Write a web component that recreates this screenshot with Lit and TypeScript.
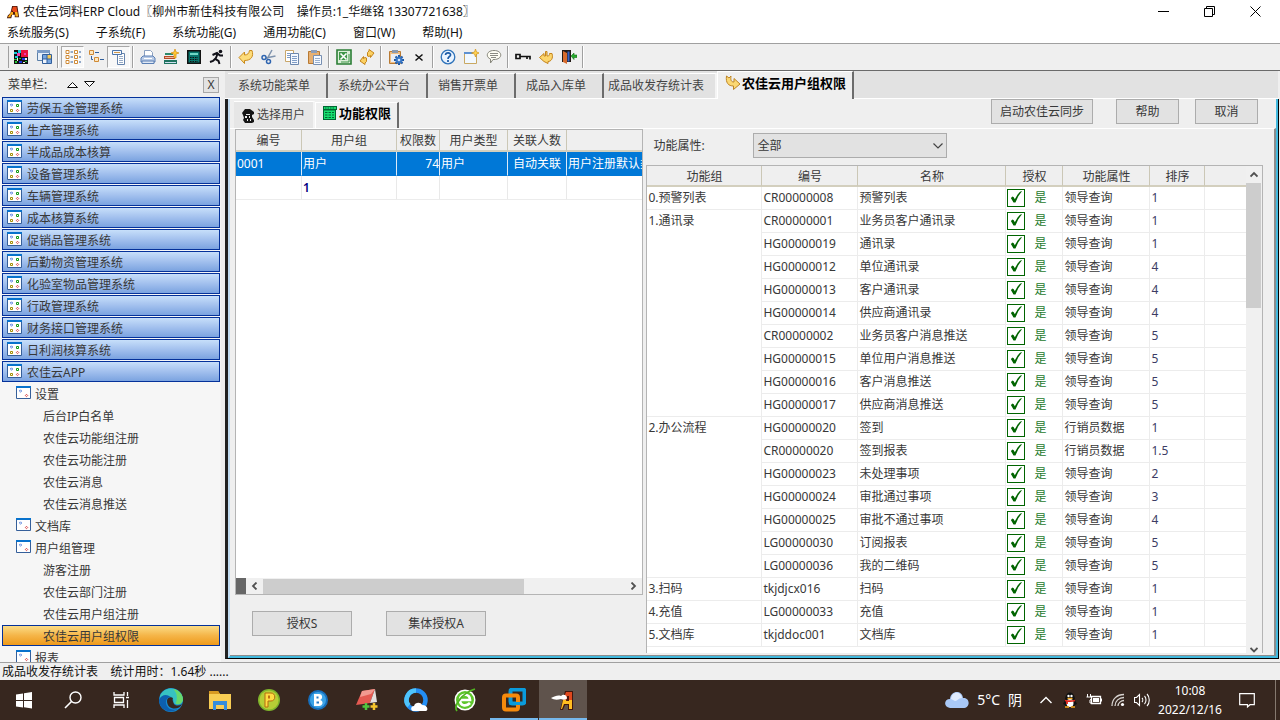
import { LitElement, html, css, svg, nothing } from "lit";
import { customElement, state } from "lit/decorators.js";
import { classMap } from "lit/directives/class-map.js";

const art: Record<string, unknown> = {
  logo: svg`<path d="M7 1h6l2 13h-5v-3H7l-1 4H1l1-3 3-3z" fill="#4a180a"/><path d="M8 2h4l1 6H8V6L6 8z" fill="#ea4a1a"/><path d="M10 8h3l1 5h-3zM2 14l4-6h2v3H6l-1 3z" fill="#ffae18"/>`,
  mosaic: svg`<path d="M1 1h14v14H1z" fill="#111"/><path d="M8 1h7v7H8z" fill="#e8123c"/><path d="M1 3h3v2H1zM5 1h3v3H5zM2 7h3v2H2z" fill="#18c8d8"/><path d="M4 4h3v3H4zM11 4h2v2h-2z" fill="#f03ab0"/><path d="M1 10h4v1H1zM2 12h2v2H2zM6 9h2v1H6zM12 12h2v1h-2z" fill="#24c836"/><path d="M9 9h3v2H9zM6 12h3v2H6z" fill="#1d36e0"/><path d="M12 9h2v2h-2zM4 9h1v3H4zM10 13h2v1h-2z" fill="#f2f2ee"/>`,
  windows: svg`<path d="M1.500 1.500h12v10h-12z" fill="#e6effa" stroke="#5b7fa8"/><path d="M1 1h13v3H1z" fill="#7c9cc6"/><path d="M6.500 5.500h9v9h-9z" fill="#eef4fc" stroke="#315f9c"/><path d="M7 6h4v4H7zM11 10h4v4h-4z" fill="#77a5df"/><path d="M11 6h4v4h-4z" fill="#f5c95a"/><path d="M11 6v8M7 10h8" stroke="#315f9c"/>`,
  list: svg`<g fill="#fff" stroke="#d08a35"><path d="M1 1.500h3v3H1zM9.500 1.500h3v3h-3zM1 6.500h3v3H1zM9.500 6.500h3v3h-3zM1 11.500h3v3H1zM9.500 11.500h3v3h-3z"/></g><path d="M5.500 3h2.500M14 3h2M5.500 8h2.500M14 8h2M5.500 13h2.500M14 13h2" stroke="#315f9c"/>`,
  tree: svg`<path d="M1.500 1.500h4v4h-4zM6.500 8.500h4v4h-4z" fill="#fde7c0" stroke="#d08a35"/><path d="M7 3.500h4M12 10.500h4M3.500 7v3.500H5" stroke="#315f9c" fill="none"/>`,
  panel: svg`<path d="M6.500 4.500h7v11h-7z" fill="#fff" stroke="#6684ad"/><path d="M8 7.500h4M8 9.500h4M8 11.500h4M8 13.500h4" stroke="#95a9c4"/><path d="M1.500 1.500h9v4h-9z" fill="#f5f8fd" stroke="#4d74a8"/><path d="M3 3.500h6" stroke="#d39a49"/>`,
  printer: svg`<path d="M4.500 1.500h6l2 2v5h-8z" fill="#fff" stroke="#8aa0c0"/><path d="M1 9l2-2h10l2 2v4H1z" fill="#b9cbe6" stroke="#5a7fb4"/><path d="M2 12h12v2.500H2z" fill="#dfe8f5" stroke="#5a7fb4"/><path d="M4 9.500h8" stroke="#fff"/>`,
  books: svg`<path d="M2 4h8v2H2z" fill="#2e8a6c"/><path d="M1 7h11v3H1z" fill="#b64a28"/><path d="M2 8.500h9" stroke="#e9b79c"/><path d="M1 11h13v4H1z" fill="#1f7360"/><path d="M2 13.500h11" stroke="#cde"/><path d="M12 0l1 3 3 1-3 1v4h-2V5L8 4l3-1z" fill="#ffc832" stroke="#d58c12" stroke-width=".7"/>`,
  calc: svg`<path d="M1 1h14v14H1z" fill="#111"/><path d="M2.500 2.500h11v11h-11z" fill="#08756c"/><path d="M4 4h8v2H4z" fill="#72d7c4"/><path d="M4 8.500h8M4 10.500h8M4 12.500h8" stroke="#111" stroke-dasharray="1.500 1"/>`,
  runner: svg`<circle cx="11.500" cy="2.500" r="1.800" fill="#101018"/><path d="M14 6.500h-3L8 4 3.500 6M8.500 5l-2 5 3 2 1 3M7 9l-3 3-3 1" fill="none" stroke="#101018" stroke-width="2"/>`,
  back: svg`<path d="M1 8.500L6.500 3v3C9.500 6 11 4.500 11.500 1.500h2.500c2 6-1 10-7.500 10v3z" fill="#fddc7a" stroke="#c98a1c"/>`,
  cut: svg`<path d="M11 1L6 10M14.500 7L5 9" stroke="#7f93ad" stroke-width="1.500"/><circle cx="3" cy="8.500" r="2" fill="none" stroke="#2f65b0" stroke-width="1.500"/><circle cx="7.500" cy="12.500" r="2" fill="none" stroke="#2f65b0" stroke-width="1.500"/>`,
  copy: svg`<path d="M1.500 1.500h8v11h-8z" fill="#fff" stroke="#c8a66a"/><path d="M6.500 4.500h8v11h-8z" fill="#f4f8fe" stroke="#6c87ad"/><path d="M3 4.500h3M3 6.500h3M3 8.500h3M8 7.500h5M8 9.500h5M8 11.500h5M8 13.500h5" stroke="#7f9cc6"/>`,
  paste: svg`<path d="M1.500 2.500h11v12h-11z" fill="#e7b071" stroke="#b87a33"/><path d="M4 1h6v3H4z" fill="#8e9fb8"/><path d="M6.500 6.500h8v9h-8z" fill="#f6faff" stroke="#7890b2"/><path d="M8 9.500h5M8 11.500h5M8 13.500h5" stroke="#9ab0cf"/>`,
  excel: svg`<path d="M1 1h14v14H1z" fill="#dcefd9" stroke="#2a7d34" stroke-width="1.600"/><path d="M3 3h8v8H3z" fill="#3f9648"/><path d="M4.500 4.500l6 6M10.500 4.500l-6 6" stroke="#fff" stroke-width="1.600"/><path d="M5 13h8M13 5v8" stroke="#3f9648"/>`,
  refresh: svg`<path d="M8.500 7V3.500L10 2V.500l5 3.500-3.500 4.500V6.500L10 7.500zM7.500 9v3.500L6 14v1.500L1 12l3.500-4.500v2L6 8.500z" fill="#fbd061" stroke="#c4841c"/>`,
  gearpaste: svg`<path d="M1.500 2.500h11v12h-11z" fill="#efbd83" stroke="#b87a33"/><path d="M4 1h6v3H4z" fill="#8b99ad"/><path d="M3 5h8v8H3z" fill="#e9eef6"/><path d="M11 6v10M6 11h10M7.500 7.500l7 7M14.500 7.500l-7 7" stroke="#1c56a4" stroke-width="2"/><circle cx="11" cy="11" r="3.500" fill="#3877c5"/><circle cx="11" cy="11" r="1.300" fill="#d5e6fb"/>`,
  cross: svg`<path d="M4.500 5.500l7 6M11.500 5.500l-7 6" stroke="#111" stroke-width="1.500"/>`,
  help: svg`<circle cx="8" cy="8" r="6.800" fill="#eaf4ff" stroke="#2f73ba" stroke-width="1.300"/><path d="M5.500 6c.2-3.200 5.500-2.700 5 .2C10.200 7.700 8 7.600 8 10M8 11v2" fill="none" stroke="#1a5aa6" stroke-width="1.700"/>`,
  newwin: svg`<path d="M1.500 3.500h12v11h-12z" fill="#f1f8ff" stroke="#c9a862"/><path d="M1 3h9v2H1z" fill="#5e91d1"/><path d="M12.500 0l1 3 3 1-3 1-1 3-1-3-3-1 3-1z" fill="#ffd455" stroke="#d3951d" stroke-width=".7"/>`,
  chat: svg`<path d="M8 1.500c9 0 9 9 0 9H7L4.500 14v-4C-.8 8 .5 1.500 8 1.500z" fill="#fffef4" stroke="#87877c"/><path d="M4 4.500h8M4 6.500h8M5 8.500h5" stroke="#8b8b83"/>`,
  key: svg`<path d="M1 5.500h4v4H1z" fill="none" stroke="#111" stroke-width="1.700"/><path d="M5 7.500h10v3M12 7v3" fill="none" stroke="#111" stroke-width="1.700"/>`,
  redo: svg`<path d="M1.500 8.500L6 4.500V7h1.500V2.500H9V7h1c1 0 1.500-1 1.500-2.500H14c1.500 5-1 8-4 8v2L6 12.500z" fill="#fcd56c" stroke="#c4841c"/>`,
  door: svg`<path d="M1 1h9v12H1z" fill="#221a16"/><path d="M2 2l4 2v11l-4-2z" fill="#d76b2d"/><path d="M6.500 2.500h2v10h-2z" fill="#3662c6"/><path d="M10 7l3-3v2h3v2.500h-3v2z" fill="#27a92c" stroke="#12701a" stroke-width=".6"/>`,
  spy: svg`<path d="M2 6l3-4h5l4 3v2l-2 1v2l2 3v2l-2 1H5l-2-3 1-2-1-3z" fill="#151515"/><path d="M6 7h4v1H6zM5 9h2v2H5zM9 9h1v2H9zM7 12h1v2H7zM10 12h1v2h-1z" fill="#eee"/>`,
  sheet: svg`<path d="M1 1h14v4h-1v10H1z" fill="#063"/><path d="M2 2h12v2H2zM2 5.500h11V14H2z" fill="#18e070"/><path d="M3 3h10" stroke="#063" stroke-dasharray="1.500 1"/><path d="M3 7.500h9M3 10h9M3 12.500h9" stroke="#063" stroke-dasharray="2.500 1"/>`,
  arrow: svg`<path d="M1.500 1c-1 7 2 10 7 10v3.500L15 9 9 3.500V7C6 7 5.500 5 6 1L4 3z" fill="#fbd873" stroke="#bd8424"/>`,
  module: svg`<path d="M.5.500h14v13H.5z" fill="#fff" stroke="#355f9a"/><path d="M0 0h15v2H0z" fill="#0872cc"/><path d="M4.500 3.800L5.700 5 4.500 6.200 3.300 5z" fill="none" stroke="#4b76de"/><path d="M9.500 4.500h2v2h-2z" fill="none" stroke="#159a16"/><path d="M3.500 9.500h2v2h-2z" fill="none" stroke="#a39108"/><path d="M10.500 9.300l1.200 1.200-1.200 1.200-1.200-1.200z" fill="none" stroke="#d84343"/>`,
  group: svg`<path d="M.5.500h14v12H.5z" fill="#fff" stroke="#355f9a"/><path d="M0 0h15v2H0z" fill="#0872cc"/><path d="M4.500 3.800L5.700 5 4.500 6.200 3.300 5z" fill="none" stroke="#5c86de"/><path d="M10.500 8.300l1.200 1.200-1.200 1.200-1.200-1.200z" fill="none" stroke="#d84343"/>`,
};

const big: Record<string, unknown> = {
  start: svg`<path d="M4 6.500l7-1V12H4zM12 5.300L20 4v8h-8zM4 13h7v6.500l-7-1zM12 13h8v7.500l-8-1.300z" fill="#fff"/>`,
  search: svg`<circle cx="14.500" cy="9.500" r="5.500" fill="none" stroke="#fff" stroke-width="1.400"/><path d="M10.500 13.500L4 20" stroke="#fff" stroke-width="1.600"/>`,
  taskview: svg`<path d="M4 4v3h10V4M4 20v-3h10v3M4.500 9.500h9v5h-9zM17.500 4v4M17.500 12v8M16 9.500h3" fill="none" stroke="#fff" stroke-width="1.300"/>`,
  edge: svg`<circle cx="12" cy="12" r="12" fill="#168bd2"/><path d="M1 8C5-2 20-2 23.500 9c1.500 6-3 8-7 7-3-1-2-2-2-3 0-6-9-7-13.500-1z" fill="#37c2c1"/><path d="M14 1c7 1 11 7 9.700 12-1.200 3.500-5 4-7.200 3C19 10 18 4 14 1z" fill="#68d96c"/><path d="M8 13c0-3 3-5 6-3-1 1 0 4 1 6 2 2 5 2 8 0-3 7-15 6-15-3z" fill="#37271f"/><path d="M0 12c2-6 9-6 11-3-5 1-6 8 0 12 3 1 5 1 8 0C10 27 0 21 0 12z" fill="#0d5fae"/>`,
  folder: svg`<path d="M1 3h9l2 3h11v15H1z" fill="#f8cd54"/><path d="M1 3h9l2 3H1z" fill="#d89a22"/><path d="M5 13h14v9h-3v-5H8v5H5z" fill="#348ddb"/>`,
  pcoin: svg`<circle cx="12" cy="12" r="11" fill="#7fb52c"/><circle cx="12" cy="12" r="9.500" fill="#b6ce36"/><path d="M8 19V5h6c5 0 5 8 0 8h-3v6z" fill="#ffdc43" stroke="#b66b0e"/><path d="M11 7.500h2v3h-2z" fill="#bd7012"/>`,
  bcoin: svg`<circle cx="12" cy="12" r="10" fill="#166fbd"/><circle cx="12" cy="12" r="8" fill="#3ba2e6"/><path d="M8 6h5c4 0 4 5 1 6 4 1 3 6-1 6H8z" fill="#fff"/><path d="M10.500 8.500h2v2h-2zM10.500 13.500h2.500v2h-2.500z" fill="#2579c3"/>`,
  card: svg`<path d="M7 3l13-2-5 14-14 2z" fill="#e45a52"/><path d="M7 3l13-2-4 5-11 3z" fill="#f19a91"/><path d="M20 1l2 13-7 1-14 2 14-2z" fill="#e3e0df"/><path d="M11 15v7M7.500 18.500h7" stroke="#51c43f" stroke-width="2.500"/><path d="M19 15v7M15.500 18.500h7" stroke="#f5c52e" stroke-width="2.500"/>`,
  qbrowser: svg`<circle cx="12" cy="12" r="9.500" fill="none" stroke="#238ef4" stroke-width="4.500"/><path d="M12 2.500c-9 0-12 11-7 15" fill="none" stroke="#4fc4fb" stroke-width="4.500"/><path d="M9 23c-3-1-2-5 1-5 1-4 7-4 8-1 6 0 7 6 3 6z" fill="#fff"/>`,
  egreen: svg`<circle cx="12" cy="12" r="10.500" fill="#fff"/><circle cx="12" cy="12" r="9" fill="#5dc52b"/><path d="M7 12h10c0-7-10-7-10 0 0 6 6 7 10 3" fill="none" stroke="#fff" stroke-width="2.700"/><path d="M4 23c-4-5 5-18 18-22" fill="none" stroke="#51b521" stroke-width="1.800"/>`,
  vm: svg`<rect x="8.500" y="1.500" width="14" height="14" rx="2" fill="none" stroke="#0a9bdc" stroke-width="4"/><rect x="2" y="7.500" width="14" height="14" rx="2" fill="none" stroke="#f68a0c" stroke-width="4"/><path d="M9 13.500v2h10" fill="none" stroke="#0a9bdc" stroke-width="3"/>`,
  appa: svg`<path d="M14 3h8v19h-5v-5h-3l-2 5H9z" fill="#42170e"/><path d="M15 4h6v8h-9z" fill="#df481e"/><path d="M12 12h9v9h-3v-5h-5l-2 5h-1z" fill="#ffbd20"/><path d="M16 8h2v5h-3z" fill="#51180f"/><path d="M0 10c4-2 7-3 10-2 3-3 6 0 6 2s-4 2-6 1c-4 1-7 1-10-1z" fill="#fff"/>`,
};

const icon = (name: string) => html`<svg class="ico" viewBox="0 0 16 16" aria-hidden="true">${art[name]}</svg>`;

const menus = ["系统服务(S)", "子系统(F)", "系统功能(G)", "通用功能(C)", "窗口(W)", "帮助(H)"];
const tools = [
  ["mosaic", "windows"], ["list", "tree", "panel"], ["printer", "books", "calc", "runner"],
  ["back", "cut", "copy", "paste"], ["excel", "refresh"], ["gearpaste", "cross"],
  ["help", "newwin", "chat"], ["key", "redo", "door"],
];
const pressed = new Set(["list", "panel"]);
const modules = ["劳保五金管理系统", "生产管理系统", "半成品成本核算", "设备管理系统", "车辆管理系统", "成本核算系统", "促销品管理系统", "后勤物资管理系统", "化验室物品管理系统", "行政管理系统", "财务接口管理系统", "日利润核算系统", "农佳云APP"];
const tree: { name: string; items: string[] }[] = [
  { name: "设置", items: ["后台IP白名单", "农佳云功能组注册", "农佳云功能注册", "农佳云消息", "农佳云消息推送"] },
  { name: "文档库", items: [] },
  { name: "用户组管理", items: ["游客注册", "农佳云部门注册", "农佳云用户组注册", "农佳云用户组权限"] },
  { name: "报表", items: [] },
];
const tabs = ["系统功能菜单", "系统办公平台", "销售开票单", "成品入库单", "成品收发存统计表"];
const Q = "领导查询";
const S = "行销员数据";
const groups: { name: string; rows: [string, string, string, string][] }[] = [
  { name: "0.预警列表", rows: [["CR00000008", "预警列表", Q, "1"]] },
  {
    name: "1.通讯录", rows: [
      ["CR00000001", "业务员客户通讯录", Q, "1"], ["HG00000019", "通讯录", Q, "1"],
      ["HG00000012", "单位通讯录", Q, "4"], ["HG00000013", "客户通讯录", Q, "4"],
      ["HG00000014", "供应商通讯录", Q, "4"], ["CR00000002", "业务员客户消息推送", Q, "5"],
      ["HG00000015", "单位用户消息推送", Q, "5"], ["HG00000016", "客户消息推送", Q, "5"],
      ["HG00000017", "供应商消息推送", Q, "5"],
    ],
  },
  {
    name: "2.办公流程", rows: [
      ["HG00000020", "签到", S, "1"], ["CR00000020", "签到报表", S, "1.5"],
      ["HG00000023", "未处理事项", Q, "2"], ["HG00000024", "审批通过事项", Q, "3"],
      ["HG00000025", "审批不通过事项", Q, "4"], ["LG00000030", "订阅报表", Q, "5"],
      ["LG00000036", "我的二维码", Q, "5"],
    ],
  },
  { name: "3.扫码", rows: [["tkjdjcx016", "扫码", Q, "1"]] },
  { name: "4.充值", rows: [["LG00000033", "充值", Q, "1"]] },
  { name: "5.文档库", rows: [["tkjddoc001", "文档库", Q, "1"]] },
];

const shared = css`
  * { box-sizing: border-box; }
  button, select, input { font: inherit; color: inherit; margin: 0; border-radius: 0; }
  button { padding: 0; border: 0; background: none; white-space: nowrap; }
  a { color: inherit; text-decoration: none; }
  .ico { display: block; width: 16px; height: 16px; flex: none; }
`;

@customElement("erp-sidebar")
class ErpSidebar extends LitElement {
  static styles = [shared, css`
    :host { display: flex; flex-direction: column; width: 221px; flex: none; overflow: hidden; background: #f6f6f6; color: #383838; }
    .head { display: flex; align-items: center; height: 26px; flex: none; padding: 1px 2px 0 8px; background: #efefef; }
    .head svg { width: 11px; height: 7px; margin-right: 6px; }
    .caption { width: 59px; }
    .close { margin-left: auto; width: 16px; height: 16px; border: 1px solid #a8a8a8; background: #e3e3e3; line-height: 14px; }
    .list { display: flex; flex-direction: column; gap: 1px; flex: 1; min-height: 0; overflow: hidden; }
    .row { display: flex; align-items: center; gap: 4px; height: 21px; flex: none; margin: 0 1px 0 2px; padding-top: 2px; border: 1px solid transparent; line-height: 17px; }
    .row svg { display: block; width: 15px; height: 14px; margin-bottom: 4px; }
    .module { padding-left: 4px; gap: 5px; border-color: #04319a; background: linear-gradient(#c7dffa, #a6c3ef 45%, #7ba3e0); }
    .group { padding-left: 13px; }
    .leaf { padding-left: 40px; }
    .current { border-color: #04319a; background: linear-gradient(#fbdc86, #f5b548 50%, #ee9a1c); }
  `];

  render() {
    return html`
      <div class="head">
        <span class="caption">菜单栏:</span>
        <svg viewBox="0 0 11 7"><path d="M.5 6.500h10l-5-5z" fill="#fff" stroke="#111"/></svg>
        <svg viewBox="0 0 11 7"><path d="M.5.500h10l-5 5z" fill="#fff" stroke="#111"/></svg>
        <button class="close" aria-label="关闭菜单栏">X</button>
      </div>
      <nav class="list">
        ${modules.map((m) => html`<a class="row module" href="#"><svg viewBox="0 0 15 14">${art.module}</svg>${m}</a>`)}
        ${tree.map((g) => html`
          <a class="row group" href="#"><svg viewBox="0 0 15 14">${art.group}</svg>${g.name}</a>
          ${g.items.map((i) => html`<a class=${classMap({ row: true, leaf: true, current: i === "农佳云用户组权限" })} href="#">${i}</a>`)}
        `)}
      </nav>`;
  }
}

@customElement("user-groups")
class UserGroups extends LitElement {
  static styles = [shared, css`
    :host { display: flex; flex-direction: column; min-width: 0; color: #383838; }
    .box { display: flex; flex-direction: column; flex: 1; min-height: 0; border: 1px solid #b4b4b4; background: #fff; overflow: hidden; }
    .view { flex: 1; min-height: 0; overflow: hidden; }
    table { table-layout: fixed; width: 520px; border-collapse: separate; border-spacing: 0; }
    th, td { font-weight: inherit; padding: 0 1px; border-right: 1px solid #e9e9e9; white-space: nowrap; overflow: hidden; text-align: left; line-height: 20px; }
    th { height: 22px; padding-top: 2px; line-height: 18px; text-align: center; background: #efefef; border-right-color: #cbc7b6; border-bottom: 2px solid #d3cfbe; }
    td { height: 24px; border-bottom: 1px solid #ececec; }
    .chosen td { background: #0078d7; color: #fff; border-bottom-color: #0078d7; border-right-color: #dceaf8; }
    td.num { text-align: right; padding: 0; }
    td.mid { text-align: center; }
    td.count { color: #000080; font-weight: 600; }
    .c1 { width: 66px; } .c2 { width: 95px; } .c3 { width: 43px; } .c4 { width: 68px; } .c5 { width: 59px; }
    .scroll { display: flex; align-items: center; height: 16px; flex: none; background: #f0f0f0; }
    .grip { width: 10px; height: 16px; background: #666; }
    .arrow { width: 17px; height: 16px; display: grid; place-items: center; }
    .arrow svg { width: 7px; height: 8px; }
    .track { flex: 1; height: 15px; }
    .thumb { width: 72%; height: 15px; background: #cdcdcd; }
    .actions { display: flex; gap: 34px; padding: 16px 17px 19px; }
    .actions button { width: 100px; height: 25px; background: #e2e2e2; border: 1px solid #acacac; }
  `];

  render() {
    return html`
      <div class="box">
        <div class="view">
          <table>
            <colgroup><col class="c1"><col class="c2"><col class="c3"><col class="c4"><col class="c5"><col></colgroup>
            <thead><tr><th>编号</th><th>用户组</th><th>权限数</th><th>用户类型</th><th>关联人数</th><th></th></tr></thead>
            <tbody>
              <tr class="chosen"><td>0001</td><td>用户</td><td class="num">74</td><td>用户</td><td class="mid">自动关联</td><td>用户注册默认类型</td></tr>
              <tr><td></td><td class="count">1</td><td></td><td></td><td></td><td></td></tr>
            </tbody>
          </table>
        </div>
        <div class="scroll">
          <span class="grip"></span>
          <button class="arrow" aria-label="向左"><svg viewBox="0 0 7 8"><path d="M5.500.500L2 4l3.500 3.500" fill="none" stroke="#505050" stroke-width="1.800"/></svg></button>
          <div class="track"><div class="thumb"></div></div>
          <button class="arrow" aria-label="向右"><svg viewBox="0 0 7 8"><path d="M1.500.500L5 4 1.500 7.500" fill="none" stroke="#505050" stroke-width="1.800"/></svg></button>
        </div>
      </div>
      <div class="actions"><button>授权S</button><button>集体授权A</button></div>`;
  }
}

@customElement("permission-list")
class PermissionList extends LitElement {
  static styles = [shared, css`
    :host { display: flex; flex-direction: column; min-width: 0; min-height: 0; overflow: hidden; color: #383838; }
    .filter { display: flex; align-items: center; height: 36px; flex: none; padding: 0 7px 3px; }
    .filter label { width: 100px; }
    .pick { display: grid; align-items: center; width: 194px; }
    .pick > * { grid-area: 1 / 1; }
    .pick select { appearance: none; width: 100%; height: 25px; padding: 0 3px; background: #e2e2e2; border: 1px solid #acacac; }
    .pick svg { width: 10px; height: 6px; justify-self: end; margin-right: 4px; pointer-events: none; }
    .box { display: flex; flex: 1; min-height: 0; margin-bottom: 2px; overflow: hidden; border: 1px solid #b4b4b4; border-bottom: 0; background: #fff; }
    .view { flex: 1; min-width: 0; overflow: hidden; }
    table { table-layout: fixed; width: 100%; border-collapse: separate; border-spacing: 0; }
    th, td { font-weight: inherit; padding: 0 1px; border-right: 1px solid #ececec; border-bottom: 1px solid #ececec; white-space: nowrap; overflow: hidden; text-align: left; line-height: 20px; }
    th { height: 21px; padding-top: 2px; line-height: 17px; text-align: center; background: #efefef; border-right-color: #cbc7b6; border-bottom: 2px solid #d3cfbe; }
    td { height: 23px; }
    th:last-child, td:last-child { border-right: 0; }
    .grp { vertical-align: top; padding-top: 1px; }
    .ok { display: flex; align-items: center; gap: 9px; color: #1c7a2c; }
    .ok input { appearance: none; display: grid; justify-items: center; width: 18px; height: 18px; padding-top: 1px; border: 1px solid #006400; background: #fff; }
    .ok input:checked::before { content: ""; width: 12px; height: 12px; background: #006400; clip-path: polygon(4% 58%, 18% 46%, 28% 52%, 37% 68%, 60% 30%, 80% 6%, 98% 0, 66% 44%, 42% 96%, 26% 96%); }
    .ord { color: #3c3c64; }
    .c1 { width: 115px; } .c2 { width: 96px; } .c3 { width: 148px; } .c4 { width: 57px; } .c5 { width: 87px; } .c6 { width: 55px; }
    .scroll { display: flex; flex-direction: column; width: 16px; flex: none; background: #f0f0f0; }
    .arrow { height: 17px; flex: none; display: grid; place-items: center; }
    .arrow svg { width: 8px; height: 7px; }
    .track { flex: 1; min-height: 0; padding-right: 1px; }
    .thumb { height: 27%; background: #cdcdcd; }
    .down { height: 8px; align-items: end; }
  `];

  render() {
    return html`
      <div class="filter">
        <label for="attr">功能属性:</label>
        <div class="pick">
          <select id="attr"><option>全部</option></select>
          <svg viewBox="0 0 10 6"><path d="M.5.500L5 5 9.500.500" fill="none" stroke="#444" stroke-width="1.200"/></svg>
        </div>
      </div>
      <div class="box">
        <div class="view">
          <table>
            <colgroup><col class="c1"><col class="c2"><col class="c3"><col class="c4"><col class="c5"><col class="c6"><col></colgroup>
            <thead><tr><th>功能组</th><th>编号</th><th>名称</th><th>授权</th><th>功能属性</th><th>排序</th><th></th></tr></thead>
            <tbody>
              ${groups.map((g) => g.rows.map((r, i) => html`
                <tr>
                  ${i === 0 ? html`<td class="grp" rowspan=${g.rows.length}>${g.name}</td>` : nothing}
                  <td>${r[0]}</td><td>${r[1]}</td>
                  <td><label class="ok"><input type="checkbox" checked>是</label></td>
                  <td>${r[2]}</td><td class="ord">${r[3]}</td><td></td>
                </tr>`))}
            </tbody>
          </table>
        </div>
        <div class="scroll">
          <button class="arrow" aria-label="向上"><svg viewBox="0 0 8 7"><path d="M.500 5.500L4 2l3.500 3.500" fill="none" stroke="#505050" stroke-width="1.800"/></svg></button>
          <div class="track"><div class="thumb"></div></div>
          <button class="arrow down" aria-label="向下"><svg viewBox="0 0 8 7"><path d="M.500 2L4 5.500 7.500 2" fill="none" stroke="#505050" stroke-width="1.800"/></svg></button>
        </div>
      </div>`;
  }
}

@customElement("task-bar")
class TaskBar extends LitElement {
  static styles = [shared, css`
    :host { display: flex; align-items: stretch; height: 40px; flex: none; background: #37271f; color: #fff; }
    .apps { display: flex; gap: 1px; }
    .app { display: grid; place-items: center; width: 48px; height: 40px; }
    .app svg { width: 24px; height: 24px; }
    .open { border-bottom: 2px solid #76b9ed; }
    .active { background: #5f534c; }
    .open svg { margin-top: 2px; }
    .tray { display: flex; align-items: center; margin-left: auto; }
    .tray svg { display: block; }
    .weather { display: flex; align-items: center; gap: 8px; font-size: 14px; margin-right: 16px; }
    .cloud { width: 24px; height: 18px; }
    .status { display: flex; align-items: center; gap: 8px; }
    .status svg { width: 16px; height: 16px; }
    .clock { width: 66px; margin: 0 16px 0 7px; text-align: center; line-height: 19px; }
    .note { width: 16px; height: 18px; margin-right: 20px; }
    .peek { width: 5px; height: 40px; border-left: 1px solid #85796f; }
  `];

  render() {
    return html`
      <div class="apps">
        ${Object.keys(big).map((k) => html`
          <button class=${classMap({ app: true, open: k === "vm" || k === "appa", active: k === "appa" })} aria-label=${k}>
            <svg viewBox="0 0 24 24">${big[k]}</svg>
          </button>`)}
      </div>
      <div class="tray">
        <div class="weather">
          <svg class="cloud" viewBox="0 0 24 18"><path d="M5 17C-2 16-1 8 5 8 6-1 17-1 18 7c7-1 8 10 0 10z" fill="#a9c8f6"/><path d="M6 8c1-8 10-8 11-1-4 0-4 3-7 3z" fill="#e0ecff"/></svg>
          <span>5°C</span><span>阴</span>
        </div>
        <div class="status">
          <svg viewBox="0 0 16 16"><path d="M2.500 11L8 5.500l5.500 5.500" fill="none" stroke="#fff" stroke-width="1.400"/></svg>
          <svg viewBox="0 0 16 16"><path d="M3 8c0-10 10-10 10 0l2 4-2 1-1 2H4l-1-2-2-1z" fill="#111"/><ellipse cx="8" cy="11" rx="3.500" ry="4" fill="#fff"/><circle cx="6.500" cy="4" r="1.200" fill="#fff"/><circle cx="9.500" cy="4" r="1.200" fill="#fff"/><path d="M5.500 6.500h5" stroke="#f5a81b" stroke-width="1.500"/><path d="M3 8.500c4 1 6 1 10 0M5 9v3" fill="none" stroke="#e2261d" stroke-width="1.800"/><path d="M3 15h4M9 15h4" stroke="#f5a81b" stroke-width="1.500"/></svg>
          <svg viewBox="0 0 16 16"><path d="M5.500 4.500h9v7h-9zM15.500 6.500v3" fill="none" stroke="#fff" stroke-width="1.300"/><path d="M7 6h6v4H7z" fill="#fff"/><path d="M1.500 2v3M4.500 2v3M.500 5h5v2l-1.500 1v3h2" fill="none" stroke="#fff"/></svg>
          <svg viewBox="0 0 16 16"><path d="M2 14C2 7 7 2.500 14 2.500M5 14c0-5 4-8.500 9-8.500M8 14c0-3 3-5.500 6-5.500" fill="none" stroke="#d8d4d0" stroke-width="1.300"/><circle cx="12.500" cy="12.500" r="1.600" fill="#fff"/></svg>
          <svg viewBox="0 0 16 16"><path d="M.500 5.500h2l3-3v11l-3-3h-2zM8 6c1 1 1 3 0 4M10.500 4c2 2 2 6 0 8M13 2c3 3 3 9 0 12" fill="none" stroke="#fff" stroke-width="1.100"/></svg>
        </div>
        <div class="clock">10:08<br>2022/12/16</div>
        <svg class="note" viewBox="0 0 16 18"><path d="M.700 2.700h14.600v11H11L8.500 16v-2.300H.700z" fill="none" stroke="#fff" stroke-width="1.200"/></svg>
        <div class="peek"></div>
      </div>`;
  }
}

@customElement("app-root")
class AppRoot extends LitElement {
  @state() private page = "农佳云用户组权限";

  static styles = [shared, css`
    :host { display: flex; flex-direction: column; height: 100vh; overflow: hidden; background: #efefef; color: #111; font: 12px/16px "Noto Sans", "Noto Sans CJK SC", sans-serif; }
    .title { display: flex; align-items: center; height: 22px; flex: none; padding: 1px 2px 0 6px; background: #fff; white-space: pre; }
    .title .ico { width: 14px; margin-right: 3px; }
    .wincmds { display: flex; margin-left: auto; }
    .wincmds button { width: 46px; height: 21px; display: grid; place-items: center; }
    .wincmds svg { width: 11px; height: 11px; }
    .menu { display: flex; align-items: center; gap: 27px; height: 22px; flex: none; padding-left: 7px; background: #fff; border-bottom: 1px solid #a0a0a0; }
    .tools { display: flex; align-items: center; height: 27px; flex: none; padding-left: 8px; border-bottom: 1px solid #6a6a6a; }
    .set { display: flex; align-items: center; height: 24px; }
    .set::after { content: ""; box-sizing: border-box; width: 2px; height: 22px; margin: 0 2px; border-left: 1px solid #a0a0a0; border-right: 1px solid #fff; }
    .tools .edge { width: 1px; height: 22px; background: #a0a0a0; }
    .tool { width: 23px; height: 22px; display: grid; place-items: center; }
    .down { border: 1px solid #a8a8a8; border-right-color: #fff; border-bottom-color: #fff; background: #f8f8f8; }
    .body { display: flex; flex: 1; min-height: 0; }
    .main { display: flex; flex-direction: column; flex: 1; min-width: 0; padding: 0 1px 3px 4px; }
    .strip { display: flex; align-items: end; height: 28px; flex: none; padding-left: 3px; margin-right: 1px; background: #e2e2e2; border-bottom: 1px solid #fff; }
    .tab { height: 25px; padding: 0 16px 0 10px; border: 1px solid #fff; border-width: 1px 2px 0 0; border-right-color: #6c6c6c; color: #444; }
    .wide { padding: 0 11px 0 4px; }
    .wide, .still { border-right-color: #f4f4f4; }
    .front { display: flex; align-items: center; gap: 1px; height: 28px; margin-bottom: -1px; padding: 0 6px 5px 7px; border-left: 1px solid #fff; background: #efefef; color: #000; font-size: 13px; font-weight: 700; }
    .frame { display: flex; flex: 1; min-height: 0; border: 0 solid #000; border-width: 0 1px 1px 3px; border-left-color: #222; }
    .inner { display: flex; flex-direction: column; flex: 1; min-width: 0; border: 2px solid #42b9de; border-top: 0; border-left-color: #c2dcf2; }
    .bar { display: flex; height: 29px; flex: none; align-items: end; padding: 0 18px 0 4px; }
    .bar .tab { display: flex; align-items: center; gap: 1px; height: 27px; padding: 0 8px 0 6px; background: #e6e6e6; }
    .bar .front { background: #efefef; padding: 0 6px 6px 6px; }
    .cmds { display: flex; margin-left: auto; align-self: start; color: #383838; }
    .cmds button { height: 25px; width: 63px; margin-left: 16px; background: #e2e2e2; border: 1px solid #acacac; }
    .cmds .sync { width: 102px; margin-right: 7px; }
    .page { display: grid; grid-template-columns: minmax(0, 408fr) minmax(0, 616fr); gap: 3px; flex: 1; min-height: 0; padding: 0 11px 0 5px; border: 0 solid #8c8c8c; border-width: 1px 2px 1px 0; border-top-color: #fff; }
    .foot { display: flex; align-items: center; height: 18px; flex: none; padding: 1px 2px 0; border-top: 1px solid #a0a0a0; white-space: pre; }
  `];

  render() {
    return html`
      <header class="title">
        ${icon("logo")}<span>农佳云饲料ERP Cloud〖柳州市新佳科技有限公司    操作员:1_华继铭 13307721638〗</span>
        <div class="wincmds">
          <button aria-label="最小化"><svg viewBox="0 0 11 11"><path d="M0 5.500h11" stroke="#000"/></svg></button>
          <button aria-label="还原"><svg viewBox="0 0 11 11"><path d="M.500 2.500h8v8h-8zM2.500 2.500v-2h8v8h-2" fill="none" stroke="#000"/></svg></button>
          <button aria-label="关闭"><svg viewBox="0 0 11 11"><path d="M.500.500l10 10M10.500.500l-10 10" stroke="#000"/></svg></button>
        </div>
      </header>
      <nav class="menu">${menus.map((m) => html`<button>${m}</button>`)}</nav>
      <div class="tools">
        <span class="edge"></span>
        ${tools.map((set) => html`<div class="set">${set.map((t) => html`<button class=${classMap({ tool: true, down: pressed.has(t) })} aria-label=${t}>${icon(t)}</button>`)}</div>`)}
      </div>
      <div class="body">
        <erp-sidebar></erp-sidebar>
        <main class="main">
          <div class="strip">
            ${tabs.map((t, i) => html`<button class=${classMap({ tab: true, wide: i === 4 })}>${t}</button>`)}
            <button class="tab front">${icon("arrow")}${this.page}</button>
          </div>
          <div class="frame">
            <div class="inner">
              <div class="bar">
                <button class="tab still">${icon("spy")}选择用户</button>
                <button class="tab front">${icon("sheet")}功能权限</button>
                <div class="cmds"><button class="sync">启动农佳云同步</button><button>帮助</button><button>取消</button></div>
              </div>
              <div class="page">
                <user-groups></user-groups>
                <permission-list></permission-list>
              </div>
            </div>
          </div>
        </main>
      </div>
      <footer class="foot">成品收发存统计表    统计用时：1.64秒 ......</footer>
      <task-bar></task-bar>`;
  }
}
